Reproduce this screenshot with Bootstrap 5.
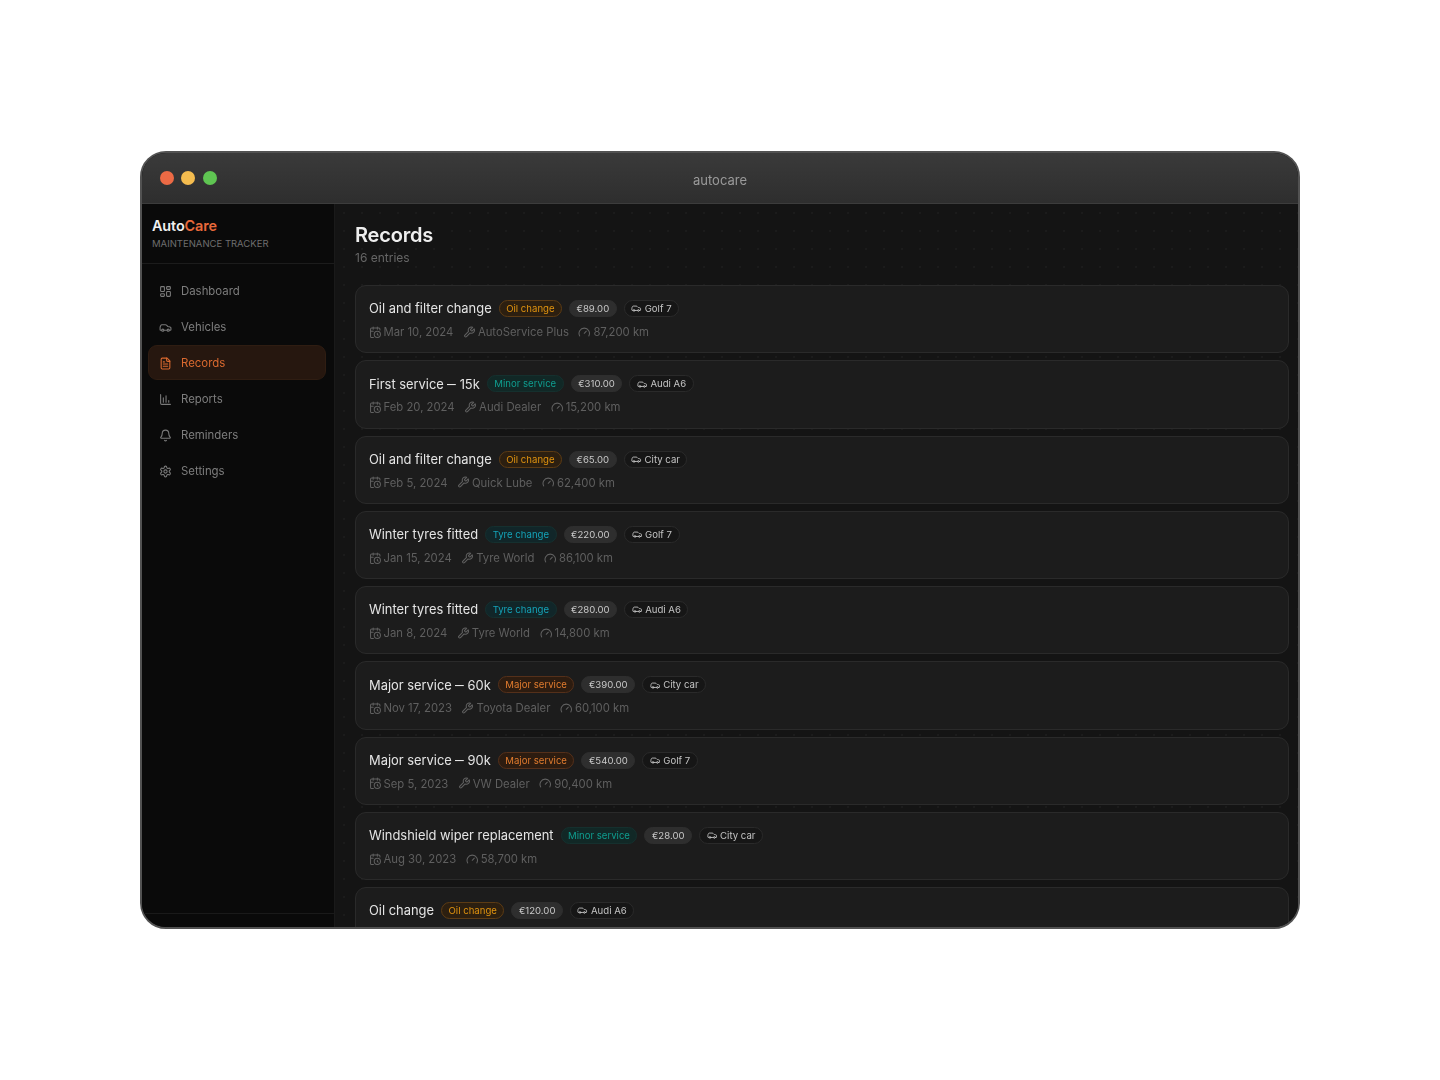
<!doctype html>
<html lang="en">
<head>
<meta charset="utf-8">
<title>autocare</title>
<link href="https://cdn.jsdelivr.net/npm/bootstrap@5.3.0/dist/css/bootstrap.min.css" rel="stylesheet">
<style>
html,body{height:100%;background:#fff;margin:0}
body{font-family:Inter,"Noto Sans",sans-serif;overflow:hidden;-webkit-font-smoothing:antialiased}
.app-window{width:1160px;height:778px;border:2px solid #525252;border-radius:26px;overflow:hidden;background:#0a0a0a;filter:blur(.3px)}
.title-strip{height:51px;background:linear-gradient(#3a3a3a,#2e2e2e);border-bottom:1px solid #3c3c3c;padding-left:18px}
.light{width:14px;height:14px;border-radius:50%;display:block}
.traffic{gap:7.300px}
.win-name{font-size:13px;color:#9a9a9a;left:0;right:0;top:19px;text-align:center;line-height:16px}
.side-col{width:193px;background:#0a0a0a;border-right:1px solid #1a1a1a}
.brand-box{height:60px;padding:13px 10px 0;border-bottom:1px solid #1c1c1c}
.brand-name{font-size:14.4px;font-weight:600;color:#f0f0f0;line-height:18px;letter-spacing:-.1px}
.brand-name span{color:#e8693a}
.brand-sub{font-size:9.5px;color:#6e6e6e;line-height:12px;margin-top:3px;white-space:nowrap}
.nav-stack{padding:9px 8px 9px 6px;gap:1px}
.nav-entry{height:35px;padding:3px 10px 0;border-radius:9px;font-size:11.4px;color:#7d7d7d;gap:9px;border:1px solid transparent}
.nav-entry svg{width:13px;height:13px;flex:none;stroke:#7a7a7a;margin-top:-1px}
.nav-entry.on{background:#26170f;color:#d9692f;border-color:#2f1d12}
.nav-entry.on svg{stroke:#d9692f}
.side-foot{margin-top:auto;height:14px;border-top:1px solid #1a1a1a}
.main-col{background-color:#141414;background-image:radial-gradient(#232323 .6px,transparent .8px);background-size:18px 18px;padding:17px 9px 0 20px;overflow:hidden;min-width:0}
.page-head{font-size:20px;font-weight:600;color:#eee;line-height:26px;letter-spacing:-.2px;padding-top:1px;margin-bottom:-1px}
.page-count{font-size:12px;color:#666;line-height:16px;margin-top:3px;margin-bottom:19px}
.rec-stack{gap:7px}
.rec-item{height:68.25px;flex:none;background:#1c1c1c;border:1px solid #2a2a2a;border-radius:11px;padding:11px 13px 0}
.rec-top{gap:7px;height:23px}
.rec-title{font-size:12.9px;color:#e4e4e4;line-height:20px;white-space:nowrap;padding-top:1.500px}
.dash-mark{display:inline-block;transform:scaleX(.68);margin:0 -2.200px}
.chip{font-size:9.6px;line-height:15px;padding:0 6.5px;border-radius:9px;border:1px solid transparent;white-space:nowrap;display:inline-flex;align-items:center;gap:3px;height:17px}
.chip-oil{color:#e0930f;background:#2c1f10;border-color:#5c3b14}
.chip-minor{color:#0f9d8f;background:#112826;border-color:#15302e}
.chip-tyre{color:#14a3b8;background:#112629;border-color:#15302f}
.chip-major{color:#e07b2e;background:#2d1c10;border-color:#55301a}
.chip-cost{color:#c8c8c8;background:#2e2e2e;border-color:#2e2e2e}
.chip-car{color:#c4c4c4;background:#161616;border-color:#2a2a2a}
.chip-car svg{width:10.500px;height:10.500px;stroke:#c4c4c4}
.rec-meta{gap:10px;font-size:11.3px;color:#5f5f5f;line-height:16px;margin-top:4px}
.rec-meta span{display:inline-flex;align-items:center;gap:2.500px;white-space:nowrap}
.rec-meta svg{width:12.500px;height:12.500px;stroke:#606060;flex:none;margin-left:-.5px}
svg{fill:none;stroke-width:2;stroke-linecap:round;stroke-linejoin:round}
</style>
</head>
<body>
<svg width="0" height="0" class="position-absolute">
<symbol id="i-dash" viewBox="0 0 24 24"><rect x="3" y="3" width="7" height="9" rx="1.5"/><rect x="14" y="3" width="7" height="5" rx="1.5"/><rect x="14" y="12" width="7" height="9" rx="1.5"/><rect x="3" y="16" width="7" height="5" rx="1.5"/></symbol>
<symbol id="i-car" viewBox="0 0 24 24"><path d="M19 17h2c.6 0 1-.4 1-1v-3c0-.9-.7-1.700-1.500-1.900C18.700 10.600 16 10 16 10s-1.300-1.400-2.200-2.300c-.5-.4-1.100-.7-1.800-.7H5c-.6 0-1.100.4-1.400.9l-1.400 2.900A3.700 3.700 0 0 0 2 12v4c0 .6.4 1 1 1h2"/><circle cx="7" cy="17" r="2"/><path d="M9 17h6"/><circle cx="17" cy="17" r="2"/></symbol>
<symbol id="i-file" viewBox="0 0 24 24"><path d="M15 2H6a2 2 0 0 0-2 2v16a2 2 0 0 0 2 2h12a2 2 0 0 0 2-2V7z"/><path d="M14 2v4a2 2 0 0 0 2 2h4"/><path d="M8 13h8M8 17h8M8 9h2"/></symbol>
<symbol id="i-bars" viewBox="0 0 24 24"><path d="M3 3v16a2 2 0 0 0 2 2h16"/><path d="M8 17V9M13 17V5M18 17v-3"/></symbol>
<symbol id="i-bell" viewBox="0 0 24 24"><path d="M10.300 21a2 2 0 0 0 3.400 0"/><path d="M3.300 15.300A1 1 0 0 0 4 17h16a1 1 0 0 0 .7-1.700C19.400 14 18 12.500 18 8A6 6 0 0 0 6 8c0 4.500-1.400 6-2.700 7.300"/></symbol>
<symbol id="i-gear" viewBox="0 0 24 24"><path d="M12.200 2h-.4a2 2 0 0 0-2 2v.2a2 2 0 0 1-1 1.700l-.4.3a2 2 0 0 1-2 0l-.2-.1a2 2 0 0 0-2.700.7l-.2.4a2 2 0 0 0 .7 2.700l.2.100a2 2 0 0 1 1 1.700v.5a2 2 0 0 1-1 1.700l-.2.100a2 2 0 0 0-.7 2.700l.2.400a2 2 0 0 0 2.700.7l.2-.1a2 2 0 0 1 2 0l.4.300a2 2 0 0 1 1 1.700v.2a2 2 0 0 0 2 2h.4a2 2 0 0 0 2-2v-.2a2 2 0 0 1 1-1.700l.4-.3a2 2 0 0 1 2 0l.2.100a2 2 0 0 0 2.700-.7l.2-.4a2 2 0 0 0-.7-2.700l-.2-.1a2 2 0 0 1-1-1.700v-.5a2 2 0 0 1 1-1.700l.2-.1a2 2 0 0 0 .7-2.700l-.2-.4a2 2 0 0 0-2.700-.7l-.2.100a2 2 0 0 1-2 0l-.4-.3a2 2 0 0 1-1-1.700V4a2 2 0 0 0-2-2z"/><circle cx="12" cy="12" r="3"/></symbol>
<symbol id="i-cal" viewBox="0 0 24 24"><path d="M21 7.500V6a2 2 0 0 0-2-2H5a2 2 0 0 0-2 2v14a2 2 0 0 0 2 2h3.500"/><path d="M16 2v4M8 2v4M3 10h5"/><path d="M17.500 17.500 16 16.300V14"/><circle cx="16" cy="16" r="6"/></symbol>
<symbol id="i-wrench" viewBox="0 0 24 24"><path d="M14.700 6.300a1 1 0 0 0 0 1.400l1.600 1.600a1 1 0 0 0 1.400 0l3.800-3.800a6 6 0 0 1-7.900 7.900l-6.900 6.900a2.100 2.100 0 0 1-3-3l6.900-6.900a6 6 0 0 1 7.900-7.900z"/></symbol>
<symbol id="i-gauge" viewBox="0 0 24 24"><path d="M3.300 19a10 10 0 1 1 17.400 0"/><path d="m12 14 4-4"/></symbol>
</svg>

<div class="d-flex align-items-center justify-content-center h-100">
<div class="app-window d-flex flex-column">
  <div class="title-strip d-flex align-items-center flex-shrink-0 position-relative">
    <div class="traffic d-flex"><i class="light" style="background:#ec6a45"></i><i class="light" style="background:#f4bc4f"></i><i class="light" style="background:#5fc552"></i></div>
    <div class="win-name position-absolute">autocare</div>
  </div>
  <div class="d-flex flex-grow-1" style="min-height:0">
    <aside class="side-col d-flex flex-column flex-shrink-0">
      <div class="brand-box">
        <div class="brand-name">Auto<span>Care</span></div>
        <div class="brand-sub">MAINTENANCE TRACKER</div>
      </div>
      <nav class="nav-stack d-flex flex-column">
        <div class="nav-entry d-flex align-items-center"><svg><use href="#i-dash"/></svg>Dashboard</div>
        <div class="nav-entry d-flex align-items-center"><svg><use href="#i-car"/></svg>Vehicles</div>
        <div class="nav-entry on d-flex align-items-center"><svg><use href="#i-file"/></svg>Records</div>
        <div class="nav-entry d-flex align-items-center"><svg><use href="#i-bars"/></svg>Reports</div>
        <div class="nav-entry d-flex align-items-center"><svg><use href="#i-bell"/></svg>Reminders</div>
        <div class="nav-entry d-flex align-items-center"><svg><use href="#i-gear"/></svg>Settings</div>
      </nav>
      <div class="side-foot"></div>
    </aside>
    <main class="main-col flex-grow-1">
      <div class="page-head">Records</div>
      <div class="page-count">16 entries</div>
      <div class="rec-stack d-flex flex-column" id="recs">
        <div class="rec-item"><div class="rec-top d-flex align-items-center"><span class="rec-title">Oil and filter change</span><span class="chip chip-oil">Oil change</span><span class="chip chip-cost">€89.00</span><span class="chip chip-car"><svg><use href="#i-car"/></svg>Golf 7</span></div><div class="rec-meta d-flex"><span><svg><use href="#i-cal"/></svg>Mar 10, 2024</span><span><svg><use href="#i-wrench"/></svg>AutoService Plus</span><span><svg><use href="#i-gauge"/></svg>87,200 km</span></div></div>
        <div class="rec-item"><div class="rec-top d-flex align-items-center"><span class="rec-title">First service <span class="dash-mark">—</span> 15k</span><span class="chip chip-minor">Minor service</span><span class="chip chip-cost">€310.00</span><span class="chip chip-car"><svg><use href="#i-car"/></svg>Audi A6</span></div><div class="rec-meta d-flex"><span><svg><use href="#i-cal"/></svg>Feb 20, 2024</span><span><svg><use href="#i-wrench"/></svg>Audi Dealer</span><span><svg><use href="#i-gauge"/></svg>15,200 km</span></div></div>
        <div class="rec-item"><div class="rec-top d-flex align-items-center"><span class="rec-title">Oil and filter change</span><span class="chip chip-oil">Oil change</span><span class="chip chip-cost">€65.00</span><span class="chip chip-car"><svg><use href="#i-car"/></svg>City car</span></div><div class="rec-meta d-flex"><span><svg><use href="#i-cal"/></svg>Feb 5, 2024</span><span><svg><use href="#i-wrench"/></svg>Quick Lube</span><span><svg><use href="#i-gauge"/></svg>62,400 km</span></div></div>
        <div class="rec-item"><div class="rec-top d-flex align-items-center"><span class="rec-title">Winter tyres fitted</span><span class="chip chip-tyre">Tyre change</span><span class="chip chip-cost">€220.00</span><span class="chip chip-car"><svg><use href="#i-car"/></svg>Golf 7</span></div><div class="rec-meta d-flex"><span><svg><use href="#i-cal"/></svg>Jan 15, 2024</span><span><svg><use href="#i-wrench"/></svg>Tyre World</span><span><svg><use href="#i-gauge"/></svg>86,100 km</span></div></div>
        <div class="rec-item"><div class="rec-top d-flex align-items-center"><span class="rec-title">Winter tyres fitted</span><span class="chip chip-tyre">Tyre change</span><span class="chip chip-cost">€280.00</span><span class="chip chip-car"><svg><use href="#i-car"/></svg>Audi A6</span></div><div class="rec-meta d-flex"><span><svg><use href="#i-cal"/></svg>Jan 8, 2024</span><span><svg><use href="#i-wrench"/></svg>Tyre World</span><span><svg><use href="#i-gauge"/></svg>14,800 km</span></div></div>
        <div class="rec-item"><div class="rec-top d-flex align-items-center"><span class="rec-title">Major service <span class="dash-mark">—</span> 60k</span><span class="chip chip-major">Major service</span><span class="chip chip-cost">€390.00</span><span class="chip chip-car"><svg><use href="#i-car"/></svg>City car</span></div><div class="rec-meta d-flex"><span><svg><use href="#i-cal"/></svg>Nov 17, 2023</span><span><svg><use href="#i-wrench"/></svg>Toyota Dealer</span><span><svg><use href="#i-gauge"/></svg>60,100 km</span></div></div>
        <div class="rec-item"><div class="rec-top d-flex align-items-center"><span class="rec-title">Major service <span class="dash-mark">—</span> 90k</span><span class="chip chip-major">Major service</span><span class="chip chip-cost">€540.00</span><span class="chip chip-car"><svg><use href="#i-car"/></svg>Golf 7</span></div><div class="rec-meta d-flex"><span><svg><use href="#i-cal"/></svg>Sep 5, 2023</span><span><svg><use href="#i-wrench"/></svg>VW Dealer</span><span><svg><use href="#i-gauge"/></svg>90,400 km</span></div></div>
        <div class="rec-item"><div class="rec-top d-flex align-items-center"><span class="rec-title">Windshield wiper replacement</span><span class="chip chip-minor">Minor service</span><span class="chip chip-cost">€28.00</span><span class="chip chip-car"><svg><use href="#i-car"/></svg>City car</span></div><div class="rec-meta d-flex"><span><svg><use href="#i-cal"/></svg>Aug 30, 2023</span><span><svg><use href="#i-gauge"/></svg>58,700 km</span></div></div>
        <div class="rec-item"><div class="rec-top d-flex align-items-center"><span class="rec-title">Oil change</span><span class="chip chip-oil">Oil change</span><span class="chip chip-cost">€120.00</span><span class="chip chip-car"><svg><use href="#i-car"/></svg>Audi A6</span></div></div>
      </div>
    </main>
  </div>
</div>
</div>
<script src="https://cdn.jsdelivr.net/npm/bootstrap@5.3.0/dist/js/bootstrap.bundle.min.js"></script>
</body>
</html>
